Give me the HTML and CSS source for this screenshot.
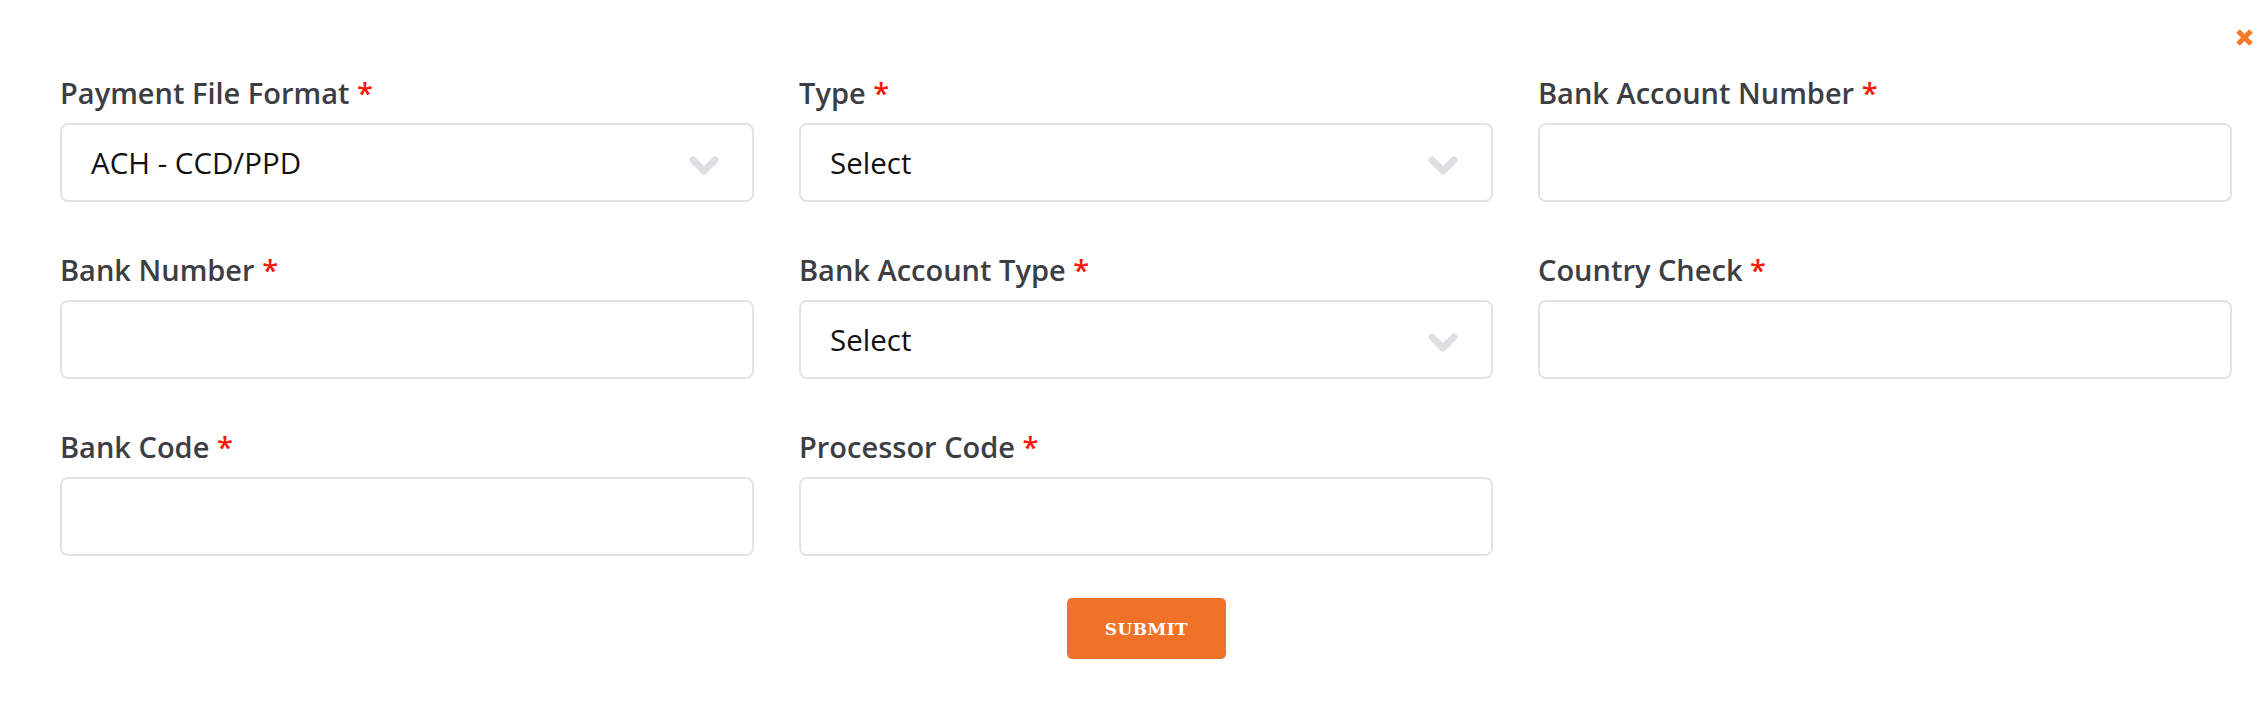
FILE: index.html
```html
<!DOCTYPE html>
<html lang="en">
<head>
<meta charset="utf-8">
<title>Payment Settings</title>
<link rel="stylesheet" href="styles.css">
</head>
<body>
<div class="modal">
  <button class="close" type="button" aria-label="Close">
    <svg width="19" height="19" viewBox="0 0 19 19"><path d="M3 3 L16 16 M16 3 L3 16" stroke="#f47a2b" stroke-width="5" stroke-linecap="butt" fill="none"/></svg>
  </button>
  <form class="form">
    <div class="grid">
      <div class="field">
        <label class="label">Payment File Format <span class="req">*</span></label>
        <div class="control select">
          <span class="value">ACH - CCD/PPD</span>
          <svg class="chev" width="30" height="20" viewBox="0 0 30 20"><polyline points="4,4 15,15 26,4" fill="none" stroke="#dfdfe3" stroke-width="7" stroke-linecap="round" stroke-linejoin="round"/></svg>
        </div>
      </div>
      <div class="field">
        <label class="label">Type <span class="req">*</span></label>
        <div class="control select">
          <span class="value">Select</span>
          <svg class="chev" width="30" height="20" viewBox="0 0 30 20"><polyline points="4,4 15,15 26,4" fill="none" stroke="#dfdfe3" stroke-width="7" stroke-linecap="round" stroke-linejoin="round"/></svg>
        </div>
      </div>
      <div class="field">
        <label class="label">Bank Account Number <span class="req">*</span></label>
        <div class="control"></div>
      </div>
      <div class="field">
        <label class="label">Bank Number <span class="req">*</span></label>
        <div class="control"></div>
      </div>
      <div class="field">
        <label class="label">Bank Account Type <span class="req">*</span></label>
        <div class="control select">
          <span class="value">Select</span>
          <svg class="chev" width="30" height="20" viewBox="0 0 30 20"><polyline points="4,4 15,15 26,4" fill="none" stroke="#dfdfe3" stroke-width="7" stroke-linecap="round" stroke-linejoin="round"/></svg>
        </div>
      </div>
      <div class="field">
        <label class="label">Country Check <span class="req">*</span></label>
        <div class="control"></div>
      </div>
      <div class="field">
        <label class="label">Bank Code <span class="req">*</span></label>
        <div class="control"></div>
      </div>
      <div class="field">
        <label class="label">Processor Code <span class="req">*</span></label>
        <div class="control"></div>
      </div>
    </div>
    <div class="actions">
      <button class="submit" type="button">SUBMIT</button>
    </div>
  </form>
</div>
</body>
</html>
```
FILE: styles.css
```css
html, body {
  margin: 0;
  padding: 0;
  background: #ffffff;
}
.modal {
  position: relative;
  box-sizing: border-box;
  width: 2268px;
  height: 712px;
  padding: 74px 35px 0 60px;
  font-family: "Open Sans", "Liberation Sans", sans-serif;
}
.close {
  position: absolute;
  top: 28px;
  right: 14px;
  width: 19px;
  height: 19px;
  padding: 0;
  border: 0;
  background: none;
  display: block;
}
.close svg { display: block; }
.grid {
  display: grid;
  grid-template-columns: repeat(3, 694px);
  column-gap: 45px;
  row-gap: 49px;
}
.field {
  display: flex;
  flex-direction: column;
  gap: 11px;
}
.label {
  font-size: 29px;
  line-height: 38px;
  font-weight: 600;
  color: #3c3e44;
  height: 38px;
}
.req {
  color: #ff1500;
}
.control {
  box-sizing: border-box;
  height: 79px;
  border: 2px solid #e2e3e5;
  border-radius: 8px;
  display: flex;
  align-items: center;
  padding: 0 33px 0 29px;
}
.select {
  justify-content: space-between;
}
.value {
  font-size: 29.5px;
  color: #111111;
  line-height: 38px;
}
.chev {
  display: block;
  margin-top: 7px;
}
.actions {
  display: flex;
  justify-content: center;
  padding-top: 42px;
}
.submit {
  width: 159px;
  height: 61px;
  border: 0;
  border-radius: 5px;
  background: #f07229;
  color: #ffffff;
  font-family: "DejaVu Serif", "Liberation Serif", serif;
  font-weight: bold;
  font-size: 17px;
  letter-spacing: 0.4px;
  padding: 0;
}
```
